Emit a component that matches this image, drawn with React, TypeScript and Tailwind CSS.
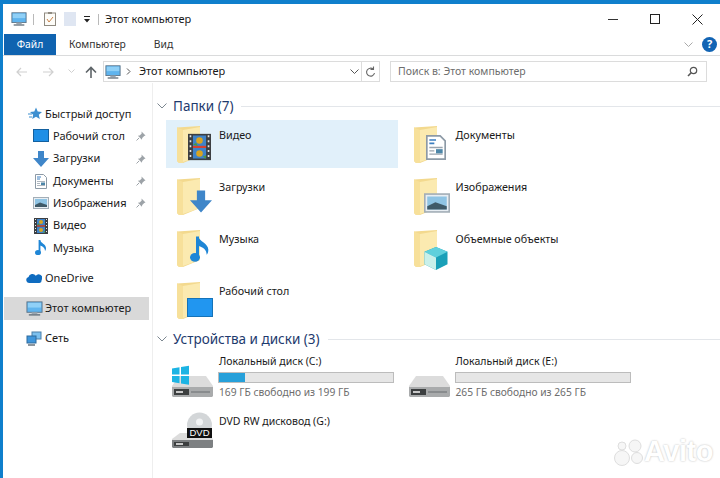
import type { ReactNode } from "react";

const font = "font-['Noto_Sans','Open_Sans',sans-serif]";

function Monitor({ size = 18 }: { size?: number }) {
    return (
        <svg width={size} height={size} viewBox="0 0 18 18" className="shrink-0">
            <rect x="1" y="2" width="16" height="11" fill="#5fb4ee" stroke="#5d7488" strokeWidth="1" />
            <rect x="2" y="3" width="14" height="5" fill="#8fd0f7" />
            <rect x="6" y="13" width="6" height="2" fill="#9aa6b0" />
            <rect x="3" y="15" width="12" height="1.5" fill="#66737e" />
        </svg>
    );
}

function Star() {
    return (
        <svg width="14" height="14" viewBox="0 0 14 14" className="shrink-0">
            <path d="M8 0.500l1.700 4 4.300.4-3.200 2.800 1 4.300L8 9.800 4.200 12l1-4.300L2 4.900l4.300-.4z" fill="#3d8fd0" />
            <path d="M0 7h4M1 10h3" stroke="#3d8fd0" strokeWidth="1.200" />
        </svg>
    );
}

function Desktop() {
    return (
        <svg width="16" height="14" viewBox="0 0 16 14" className="shrink-0">
            <rect x="0.500" y="0.500" width="15" height="12" fill="#1f8fe6" stroke="#13609f" />
        </svg>
    );
}

function DownArrow({ w = 16, h = 16 }: { w?: number; h?: number }) {
    return (
        <svg width={w} height={h} viewBox="0 0 16 16" className="shrink-0">
            <path d="M5 0h6v7h5l-8 9-8-9h5z" fill="#3f86c9" />
        </svg>
    );
}

function Doc({ w = 12, h = 15 }: { w?: number; h?: number }) {
    return (
        <svg width={w} height={h} viewBox="0 0 12 15" className="shrink-0">
            <path d="M.5.500h8l3 3v11H.5z" fill="#fff" stroke="#8d9aa6" />
            <path d="M2 3h4M2 5h3" stroke="#3d7fc0" strokeWidth="1" />
            <path d="M2 7.500h8M2 9.500h3M2 11.500h8" stroke="#9aa4ae" strokeWidth="0.800" />
            <rect x="6" y="8.500" width="4" height="2.500" fill="#4d86a8" />
        </svg>
    );
}

function Picture({ w = 16, h = 12 }: { w?: number; h?: number }) {
    return (
        <svg width={w} height={h} viewBox="0 0 16 12" className="shrink-0">
            <rect x="0.500" y="0.500" width="15" height="11" fill="#e8eef3" stroke="#a3aeb7" />
            <rect x="2" y="2" width="12" height="8" fill="#8fc4e4" />
            <path d="M2 8l5-2.500 7 2.500v2H2z" fill="#3f5a68" />
        </svg>
    );
}

function Film({ w = 14, h = 16 }: { w?: number; h?: number }) {
    return (
        <svg width={w} height={h} viewBox="0 0 14 16" className="shrink-0">
            <rect width="14" height="16" fill="#3c3f42" />
            <path d="M1 1.500h1M1 4.500h1M1 7.500h1M1 10.500h1M1 13.500h1M12 1.500h1M12 4.500h1M12 7.500h1M12 10.500h1M12 13.500h1" stroke="#e8e8e8" strokeWidth="1.200" />
            <rect x="3" y="1" width="8" height="6.500" fill="#3f83c8" />
            <rect x="3" y="8.500" width="8" height="6.500" fill="#3f83c8" />
            <rect x="3" y="7.300" width="8" height="1.300" fill="#d8402f" />
            <circle cx="7" cy="4" r="2" fill="#d9a420" />
            <circle cx="7" cy="12" r="2" fill="#d9a420" />
            <path d="M3 6.500l2-1 1 2zM9 14l2-1v2z" fill="#4d9a3d" />
        </svg>
    );
}

function Note({ w = 12, h = 17 }: { w?: number; h?: number }) {
    return (
        <svg width={w} height={h} viewBox="0 0 12 17" className="shrink-0">
            <path d="M4.500 1v11.500" stroke="#1f86d6" strokeWidth="1.800" />
            <ellipse cx="3" cy="13.500" rx="3" ry="2.600" fill="#1f86d6" />
            <path d="M5 1c.5 3 6 4 6 8 0 1.500-.5 2.500-1 3 0-3-2-4.500-5-5.500z" fill="#1f86d6" />
        </svg>
    );
}

function Cloud() {
    return (
        <svg width="16" height="10" viewBox="0 0 16 10" className="shrink-0">
            <path d="M3 10a3 3 0 0 1-.5-5.900A4 4 0 0 1 9.800 2.800 3.400 3.400 0 0 1 15.500 7 2.500 2.500 0 0 1 13.500 10z" fill="#0f6cc0" />
        </svg>
    );
}

function Network() {
    return (
        <svg width="16" height="15" viewBox="0 0 16 15" className="shrink-0">
            <rect x="6" y="1" width="9" height="7" fill="#7cc0ee" stroke="#4a7fa8" />
            <rect x="1" y="5" width="9" height="7" fill="#3f96dc" stroke="#2f6a9c" />
            <path d="M2 14h7" stroke="#66737e" strokeWidth="1.500" />
        </svg>
    );
}

function Pin() {
    return (
        <svg width="10" height="10" viewBox="0 0 10 10" className="ml-auto mr-[3px] shrink-0">
            <path d="M5.500 0.500l4 4-1.300.5-2 2-.3 1.800-4-4L3.700 4.500l2-2z" fill="#9da3a8" />
            <path d="M3 7l-2.500 2.500" stroke="#9da3a8" strokeWidth="1" />
        </svg>
    );
}

function Folder({ children }: { children?: ReactNode }) {
    return (
        <div className="relative w-[44px] h-[40px] shrink-0">
            <svg width="24" height="37" viewBox="0 0 24 37" className="absolute left-[2px] top-[2px]">
                <path d="M0 1.500L23 0v30L6 37H2l-2-2z" fill="#f3d98e" />
                <path d="M6 4l17-3v29L6 36z" fill="#fbeab0" />
                <path d="M0 1.500V35l2 2h4V4z" fill="#f7e09a" />
            </svg>
            {children}
        </div>
    );
}

function Sidebar() {
    const row = "flex items-center h-[22.300px] text-[11px] text-[#1a1a1a]";
    const sub = `${row} pl-[29px] gap-[4px]`;
    const slot = "w-[16px] flex justify-center";
    return (
        <aside className="w-[149px] shrink-0 pl-[1px] pr-[3px] pt-[20px]">
            <div className={`${row} pl-[24px] gap-[3px]`}>
                <span className="w-[14px] flex justify-center"><Star /></span>
                Быстрый доступ
            </div>
            <div className={sub}><span className={slot}><Desktop /></span>Рабочий стол<Pin /></div>
            <div className={sub}><span className={slot}><DownArrow /></span>Загрузки<Pin /></div>
            <div className={sub}><span className={slot}><Doc /></span>Документы<Pin /></div>
            <div className={sub}><span className={slot}><Picture /></span>Изображения<Pin /></div>
            <div className={sub}><span className={slot}><Film /></span>Видео</div>
            <div className={sub}><span className={slot}><Note /></span>Музыка</div>
            <div className={`${row} pl-[22px] gap-[3px] mt-[7.800px]`}>
                <span className={slot}><Cloud /></span>OneDrive
            </div>
            <div className={`${row} pl-[22px] gap-[3px] mt-[7.700px] bg-[#d9d9d9] h-[23px]`}>
                <span className={slot}><Monitor size={17} /></span>Этот компьютер
            </div>
            <div className={`${row} pl-[22px] gap-[3px] mt-[7px]`}>
                <span className={slot}><Network /></span>Сеть
            </div>
        </aside>
    );
}

function SectionHeader({ title }: { title: string }) {
    return (
        <div className="flex items-center h-[22px] pl-[4px]">
            <svg width="10" height="6" viewBox="0 0 10 6" className="shrink-0 mr-[6px]">
                <path d="M.5.500L5 5 9.500.500" fill="none" stroke="#7c8790" strokeWidth="1" />
            </svg>
            <span className="text-[13.500px] text-[#1e3a6e] whitespace-nowrap">{title}</span>
            <div className="flex-1 h-px bg-[#e3e6ea] ml-[8px]" />
        </div>
    );
}

function FolderTile({ name, selected, children }: { name: string; selected?: boolean; children?: ReactNode }) {
    return (
        <div className={`flex h-[48px] w-[232px] pl-[9px] pt-[4px] ${selected ? "bg-[#e1f0fa]" : ""}`}>
            <Folder>{children}</Folder>
            <span className="text-[10.750px] leading-[15px] text-[#1a1a1a] mt-[4px]">{name}</span>
        </div>
    );
}

function Hdd({ win }: { win?: boolean }) {
    return (
        <svg width="41" height="34" viewBox="0 0 41 34" className="shrink-0">
            <path d="M7 11h27l7 10v3H0v-3z" fill="#dcdcdc" />
            <path d="M0 22h41v9l-1 1H1l-1-1z" fill="#a9abac" />
            <rect x="2" y="24" width="15" height="6" fill="#3c3f40" />
            <rect x="4" y="26" width="7" height="2" fill="#c9c9c9" />
            <path d="M19 27h19" stroke="#7f8285" strokeWidth="1.500" />
            {win && <path d="M0 3.500l7.500-1.200v7.200H0zM9 2l8-1.300v8.800H9zM0 11h7.500v7.200L0 17zM9 11h8v8.800l-8-1.300z" fill="#1cb4e4" />}
        </svg>
    );
}

function DvdIcon() {
    return (
        <div className="relative w-[41px] h-[37px] shrink-0">
            <svg width="41" height="37" viewBox="0 0 41 37" className="absolute left-0 top-0">
                <circle cx="27.500" cy="13" r="12.500" fill="#d3d6d8" />
                <circle cx="27.500" cy="10" r="3.500" fill="#f2f3f4" />
                <path d="M8 21h25l8 6v3H0v-3z" fill="#dcdcdc" />
                <path d="M0 28h41v7l-1 1H1l-1-1z" fill="#7d8082" />
                <rect x="2" y="30" width="15" height="4" fill="#3c3f40" />
                <rect x="4" y="31" width="7" height="2" fill="#c9c9c9" />
            </svg>
            <span className="absolute left-[15px] top-[16px] w-[25px] h-[10px] bg-[#111] text-white text-[9.500px] leading-[10px] text-center font-['Liberation_Sans',sans-serif]">DVD</span>
        </div>
    );
}

function DriveTile({ name, free, percent, win }: { name: string; free: string; percent: number; win?: boolean }) {
    return (
        <div className="flex h-[55px] pl-[6px]">
            <div className="pt-[15px] w-[41px] shrink-0"><Hdd win={win} /></div>
            <div className="ml-[5px] w-[176px]">
                <div className="text-[10.500px] leading-[15px] text-[#1a1a1a] mt-[4px] ml-[1px]">{name}</div>
                <div className="h-[11px] w-[176px] bg-[#e6e6e6] border border-[#bcbcbc] mt-[3px]">
                    <div className="h-full bg-[#26a0da]" style={{ width: `${percent}%` }} />
                </div>
                <div className="text-[10.250px] leading-[15px] text-[#6d6d6d] mt-[1.500px] ml-[1px]">{free}</div>
            </div>
        </div>
    );
}

export default function App() {
    return (
        <div className={`${font} relative w-[720px] h-[478px] overflow-hidden bg-white border-l-[3px] border-t-[4px] border-[#0f7fcc] flex flex-col`}>
            {/* title bar */}
            <div className="flex items-center h-[30px] shrink-0 pl-[8px] text-[11px] text-[#1a1a1a]">
                <Monitor size={16} />
                <div className="w-px h-[11px] bg-[#b9b9b9] ml-[6px]" />
                <svg width="12" height="14" viewBox="0 0 12 14" className="ml-[10px]">
                    <rect x="0.500" y="1" width="11" height="12.500" fill="#fdfcf8" stroke="#8f8a80" />
                    <rect x="4" y="0" width="4" height="2" fill="#8f8a80" />
                    <path d="M3 7l2 3 4-5" fill="none" stroke="#c9824a" strokeWidth="1" />
                </svg>
                <div className="w-[12px] h-[14px] bg-[#dfe6f2] ml-[8px]" />
                <svg width="6" height="7" viewBox="0 0 6 7" className="ml-[8px]">
                    <path d="M0 0h6v1H0zM0 3h6L3 6.500z" fill="#222" />
                </svg>
                <div className="w-px h-[11px] bg-[#b9b9b9] ml-[8px]" />
                <span className="ml-[6px]">Этот компьютер</span>
                <div className="ml-auto flex items-center pr-[17px] gap-[32px]">
                    <div className="w-[10px] h-px bg-[#333]" />
                    <div className="w-[10px] h-[10px] border border-[#222]" />
                    <svg width="11" height="11" viewBox="0 0 11 11">
                        <path d="M.5.500l10 10M10.500.500l-10 10" stroke="#222" strokeWidth="1" />
                    </svg>
                </div>
            </div>

            {/* ribbon tabs */}
            <div className="flex items-center h-[22px] shrink-0 border-b border-[#dadbdc] text-[10.300px] text-[#333]">
                <div className="w-[52px] h-full ml-px bg-[#0f63b0] text-white flex items-center justify-center">Файл</div>
                <span className="ml-[13px]">Компьютер</span>
                <span className="ml-[28px]">Вид</span>
                <svg width="9" height="6" viewBox="0 0 9 6" className="ml-auto mr-[9px]">
                    <path d="M.5.500l4 4 4-4" fill="none" stroke="#a9a9a9" strokeWidth="1" />
                </svg>
                <div className="w-[15px] h-[15px] mr-[3px] rounded-full bg-[#1264b4] text-white text-[11px] font-bold flex items-center justify-center">?</div>
            </div>

            {/* address bar */}
            <div className="flex items-center h-[27px] shrink-0 pt-[4px]">
                <svg width="12" height="10" viewBox="0 0 12 10" className="ml-[13px]">
                    <path d="M11 5H1M5 1L1 5l4 4" fill="none" stroke="#d0d0d0" strokeWidth="1.200" />
                </svg>
                <svg width="12" height="10" viewBox="0 0 12 10" className="ml-[14px]">
                    <path d="M1 5h10M7 1l4 4-4 4" fill="none" stroke="#d0d0d0" strokeWidth="1.200" />
                </svg>
                <svg width="7" height="5" viewBox="0 0 7 5" className="ml-[14px]">
                    <path d="M.5.500l3 3 3-3" fill="none" stroke="#d0d0d0" strokeWidth="1" />
                </svg>
                <svg width="12" height="12" viewBox="0 0 12 12" className="ml-[10px]">
                    <path d="M6 12V1.500M1 6.500l5-5 5 5" fill="none" stroke="#5e6468" strokeWidth="1.600" />
                </svg>
                <div className="flex items-center w-[259px] h-[21px] ml-[6px] border border-[#dcdcdc] pl-[1px]">
                    <Monitor size={16} />
                    <svg width="5" height="7" viewBox="0 0 5 7" className="ml-[5px]">
                        <path d="M1 .5l3 3-3 3" fill="none" stroke="#555" strokeWidth="1" />
                    </svg>
                    <span className="ml-[8px] text-[11px] text-[#1a1a1a]">Этот компьютер</span>
                    <svg width="9" height="6" viewBox="0 0 9 6" className="ml-auto mr-[2px]">
                        <path d="M.5.500l4 4 4-4" fill="none" stroke="#555" strokeWidth="1" />
                    </svg>
                </div>
                <div className="flex items-center justify-center w-[18px] h-[21px] border border-l-0 border-[#dcdcdc]">
                    <svg width="11" height="12" viewBox="0 0 11 12">
                        <path d="M9.500 7a4 4 0 1 1-1.200-3.800M8.500 0.500v3h-3" fill="none" stroke="#666" strokeWidth="1.100" />
                    </svg>
                </div>
                <div className="flex items-center w-[317px] h-[21px] ml-[10px] border border-[#dcdcdc] pl-[7px] text-[10.500px] text-[#6d6d6d]">
                    Поиск в: Этот компьютер
                    <svg width="11" height="11" viewBox="0 0 11 11" className="ml-auto mr-[8px]">
                        <circle cx="6.500" cy="4.500" r="3.200" fill="none" stroke="#555" strokeWidth="1.200" />
                        <path d="M4.200 6.800L1 10" stroke="#555" strokeWidth="1.600" />
                    </svg>
                </div>
            </div>

            {/* body */}
            <div className="flex flex-1 min-h-0">
                <Sidebar />
                <main className="flex-1 border-l border-[#eeeeee] pt-[12px] min-w-0">
                    <SectionHeader title="Папки (7)" />
                    <div className="grid grid-cols-[236.500px_236.500px] gap-y-[4px] pl-[13px] mt-[3px]">
                        <FolderTile name="Видео" selected>
                            <div className="absolute left-[13px] top-[9px]"><Film w={23} h={28} /></div>
                        </FolderTile>
                        <FolderTile name="Документы">
                            <div className="absolute left-[14px] top-[11px]"><Doc w={20} h={25} /></div>
                        </FolderTile>
                        <FolderTile name="Загрузки">
                            <div className="absolute left-[15px] top-[14px]"><DownArrow w={22} h={23} /></div>
                        </FolderTile>
                        <FolderTile name="Изображения">
                            <div className="absolute left-[12px] top-[17px]"><Picture w={26} h={20} /></div>
                        </FolderTile>
                        <FolderTile name="Музыка">
                            <div className="absolute left-[15px] top-[5px]"><Note w={20} h={32} /></div>
                        </FolderTile>
                        <FolderTile name="Объемные объекты">
                            <svg width="24" height="23" viewBox="0 0 24 24" className="absolute left-[12px] top-[19px]">
                                <path d="M12 0l12 5v13l-12 6-12-6V5z" fill="#1aa0b8" />
                                <path d="M12 0l12 5-12 6L0 5z" fill="#5fd0dc" />
                                <path d="M0 5l12 6v13L0 18z" fill="#c9f0ea" />
                            </svg>
                        </FolderTile>
                        <FolderTile name="Рабочий стол">
                            <div className="absolute left-[12px] top-[18px] w-[26px] h-[19px] bg-[#2196f0] border border-[#1573b8]" />
                        </FolderTile>
                    </div>
                    <div className="mt-[4px]"><SectionHeader title="Устройства и диски (3)" /></div>
                    <div className="grid grid-cols-[236.500px_236.500px] pl-[13px]">
                        <DriveTile name="Локальный диск (C:)" free="169 ГБ свободно из 199 ГБ" percent={15} win />
                        <DriveTile name="Локальный диск (E:)" free="265 ГБ свободно из 265 ГБ" percent={0} />
                        <div className="flex pl-[6px] pt-[7px]">
                            <DvdIcon />
                            <span className="text-[10.500px] leading-[15px] text-[#1a1a1a] ml-[6px] mt-[2px] whitespace-nowrap">DVD RW дисковод (G:)</span>
                        </div>
                    </div>
                </main>
            </div>

            {/* watermark */}
            <div className="absolute left-[609px] top-[433px] flex items-center">
                <svg width="32" height="28" viewBox="0 0 32 28" className="shrink-0">
                    <circle cx="10" cy="20" r="7.500" fill="#f6f6f6" stroke="#dedede" />
                    <circle cx="25" cy="20" r="5.500" fill="#f6f6f6" stroke="#dedede" />
                    <circle cx="10" cy="8" r="4" fill="#f6f6f6" stroke="#dedede" />
                    <circle cx="23" cy="8" r="6" fill="#f6f6f6" stroke="#dedede" />
                </svg>
                <span className="font-['Liberation_Sans',sans-serif] text-[29px] leading-none font-bold text-white [text-shadow:0_0_2px_#b5b5b5] tracking-[-0.5px]">Avito</span>
            </div>
        </div>
    );
}
